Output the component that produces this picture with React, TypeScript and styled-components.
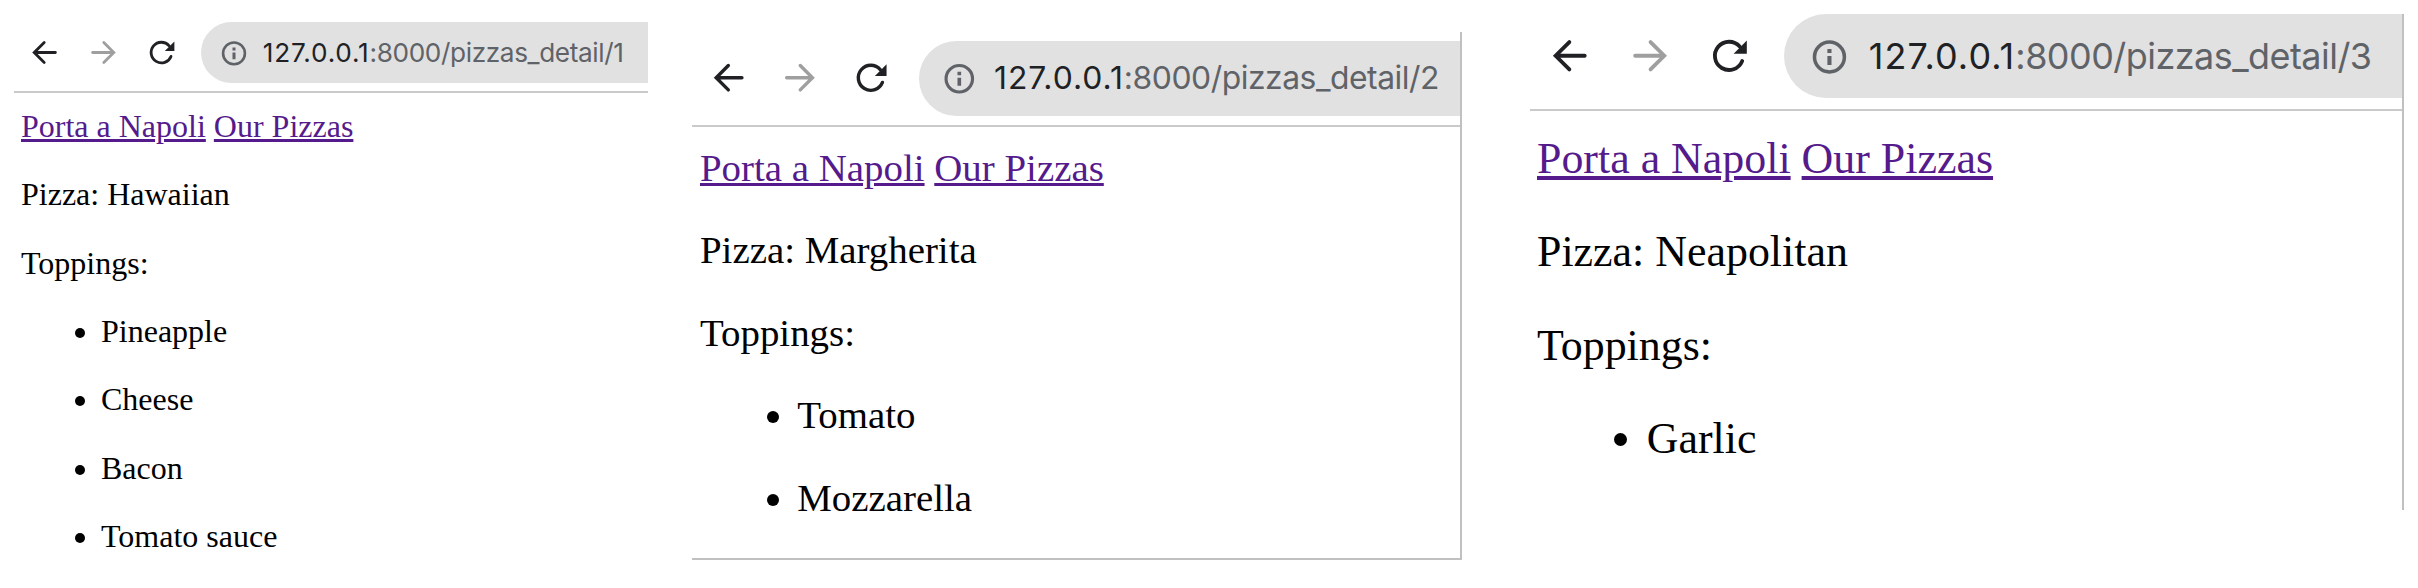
import React from "react";
import styled, { createGlobalStyle } from "styled-components";

const GlobalStyle = createGlobalStyle`
  body { margin: 0; background: #fff; }
`;

const Board = styled.main`
  display: flex;
  align-items: flex-start;
  width: 2418px;
  height: 588px;
  overflow: hidden;
  background: #fff;
`;

const Window = styled.section<{ $unit: number; $width: number; $height: number; $top: number; $left: number; $right?: boolean; $bottom?: boolean }>`
  --u: ${(p) => p.$unit}px;
  flex: none;
  box-sizing: border-box;
  width: ${(p) => p.$width}px;
  height: ${(p) => p.$height}px;
  margin-top: ${(p) => p.$top}px;
  margin-left: ${(p) => p.$left}px;
  overflow: hidden;
  border-right: ${(p) => (p.$right ? "2px solid #c0c0c0" : "0")};
  border-bottom: ${(p) => (p.$bottom ? "2px solid #c0c0c0" : "0")};
`;

const Toolbar = styled.header<{ $pad: number; $height: number }>`
  display: flex;
  align-items: flex-start;
  box-sizing: border-box;
  height: ${(p) => p.$height}px;
  padding-top: ${(p) => p.$pad}px;
  border-bottom: 2px solid #cacaca;
`;

const Controls = styled.nav<{ $width: number }>`
  display: flex;
  align-items: center;
  justify-content: flex-end;
  flex: none;
  box-sizing: border-box;
  width: ${(p) => p.$width}px;
  height: calc(30.7 * var(--u));
  padding-right: calc(10.2 * var(--u));
  gap: calc(8.9 * var(--u));
`;

const Icon = styled.svg`
  display: block;
  flex: none;
  width: calc(20 * var(--u));
  height: calc(20 * var(--u));
`;

const AddressBar = styled.div`
  display: flex;
  align-items: center;
  flex: 1;
  box-sizing: border-box;
  height: calc(30.7 * var(--u));
  padding-left: calc(6.7 * var(--u));
  gap: calc(4.2 * var(--u));
  border-radius: calc(15.4 * var(--u)) 0 0 calc(15.4 * var(--u));
  background: #e1e1e1;
`;

const Url = styled.span`
  font-family: Inter, Roboto, sans-serif;
  font-size: calc(13.1 * var(--u));
  letter-spacing: calc(-0.19 * var(--u));
  line-height: calc(20 * var(--u));
  white-space: nowrap;
  color: #5f6368;
`;

const Host = styled.span`
  letter-spacing: calc(0.4 * var(--u));
  color: #202124;
`;

const Page = styled.article<{ $top: number; $left: number; $line: number }>`
  padding: ${(p) => p.$top}px 0 0 ${(p) => p.$left}px;
  font-family: "Liberation Serif", serif;
  font-size: calc(16 * var(--u));
  line-height: ${(p) => p.$line}px;
  color: #000;
`;

const Link = styled.a`
  color: #551a8b;
  text-decoration: underline;
`;

const Line = styled.p`
  margin: calc(16 * var(--u)) 0;
`;

const Toppings = styled.ul`
  margin: 0;
  padding-left: calc(40 * var(--u));
`;

const BackIcon = () => (
  <Icon viewBox="0 0 20 20" fill="none" stroke="#202124" strokeWidth="1.4" strokeLinecap="round">
    <path d="M15.2 9.75H5M9.6 4.75l-5 5 5 5" />
  </Icon>
);

const ForwardIcon = () => (
  <Icon viewBox="0 0 20 20" fill="none" stroke="#9f9f9f" strokeWidth="1.4" strokeLinecap="round">
    <path d="M4.8 9.75H15M10.4 4.75l5 5-5 5" />
  </Icon>
);

const ReloadIcon = () => (
  <Icon viewBox="0 0 20 20">
    <path d="M15 11.7A5.15 5.15 0 1 1 14.1 6.4" fill="none" stroke="#202124" strokeWidth="1.4" strokeLinecap="round" />
    <path d="M16.7 4.2V9.05h-4.8z" fill="#202124" />
  </Icon>
);

const InfoIcon = () => (
  <Icon viewBox="0 0 20 20">
    <circle cx="10" cy="10.2" r="5.45" fill="none" stroke="#5f6368" strokeWidth="1.3" />
    <path d="M9.25 9.8h1.5v3.3h-1.5zM9.25 7.3h1.5v1.4h-1.5z" fill="#5f6368" />
  </Icon>
);

interface Pizza {
  id: number;
  name: string;
  toppings: string[];
  unit: number;
  width: number;
  height: number;
  top: number;
  left: number;
  barPad: number;
  barHeight: number;
  controls: number;
  pageTop: number;
  pageLeft: number;
  line: number;
  right?: boolean;
  bottom?: boolean;
}

const pizzas: Pizza[] = [
  { id: 1, name: "Hawaiian", toppings: ["Pineapple", "Cheese", "Bacon", "Tomato sauce"], unit: 2, width: 634, height: 574, top: 14, left: 14, barPad: 8, barHeight: 79, controls: 187, pageTop: 15, pageLeft: 7, line: 36.35 },
  { id: 2, name: "Margherita", toppings: ["Tomato", "Mozzarella"], unit: 2.43, width: 770, height: 528, top: 32, left: 44, barPad: 9, barHeight: 95, controls: 227, pageTop: 19, pageLeft: 8, line: 43.5, right: true, bottom: true },
  { id: 3, name: "Neapolitan", toppings: ["Garlic"], unit: 2.745, width: 874, height: 496, top: 14, left: 68, barPad: 0, barHeight: 97, controls: 254, pageTop: 23, pageLeft: 7, line: 49.5, right: true },
];

export default function App() {
  return (
    <>
      <GlobalStyle />
      <Board>
        {pizzas.map((p) => (
          <Window key={p.id} $unit={p.unit} $width={p.width} $height={p.height} $top={p.top} $left={p.left} $right={p.right} $bottom={p.bottom}>
            <Toolbar $pad={p.barPad} $height={p.barHeight}>
              <Controls $width={p.controls}>
                <BackIcon />
                <ForwardIcon />
                <ReloadIcon />
              </Controls>
              <AddressBar>
                <InfoIcon />
                <Url>
                  <Host>127.0.0.1</Host>:8000/pizzas_detail/{p.id}
                </Url>
              </AddressBar>
            </Toolbar>
            <Page $top={p.pageTop} $left={p.pageLeft} $line={p.line}>
              <Link>Porta a Napoli</Link> <Link>Our Pizzas</Link>
              <Line>Pizza: {p.name}</Line>
              <Line>Toppings:</Line>
              <Toppings>
                {p.toppings.map((t) => (
                  <li key={t}>
                    <Line>{t}</Line>
                  </li>
                ))}
              </Toppings>
            </Page>
          </Window>
        ))}
      </Board>
    </>
  );
}
